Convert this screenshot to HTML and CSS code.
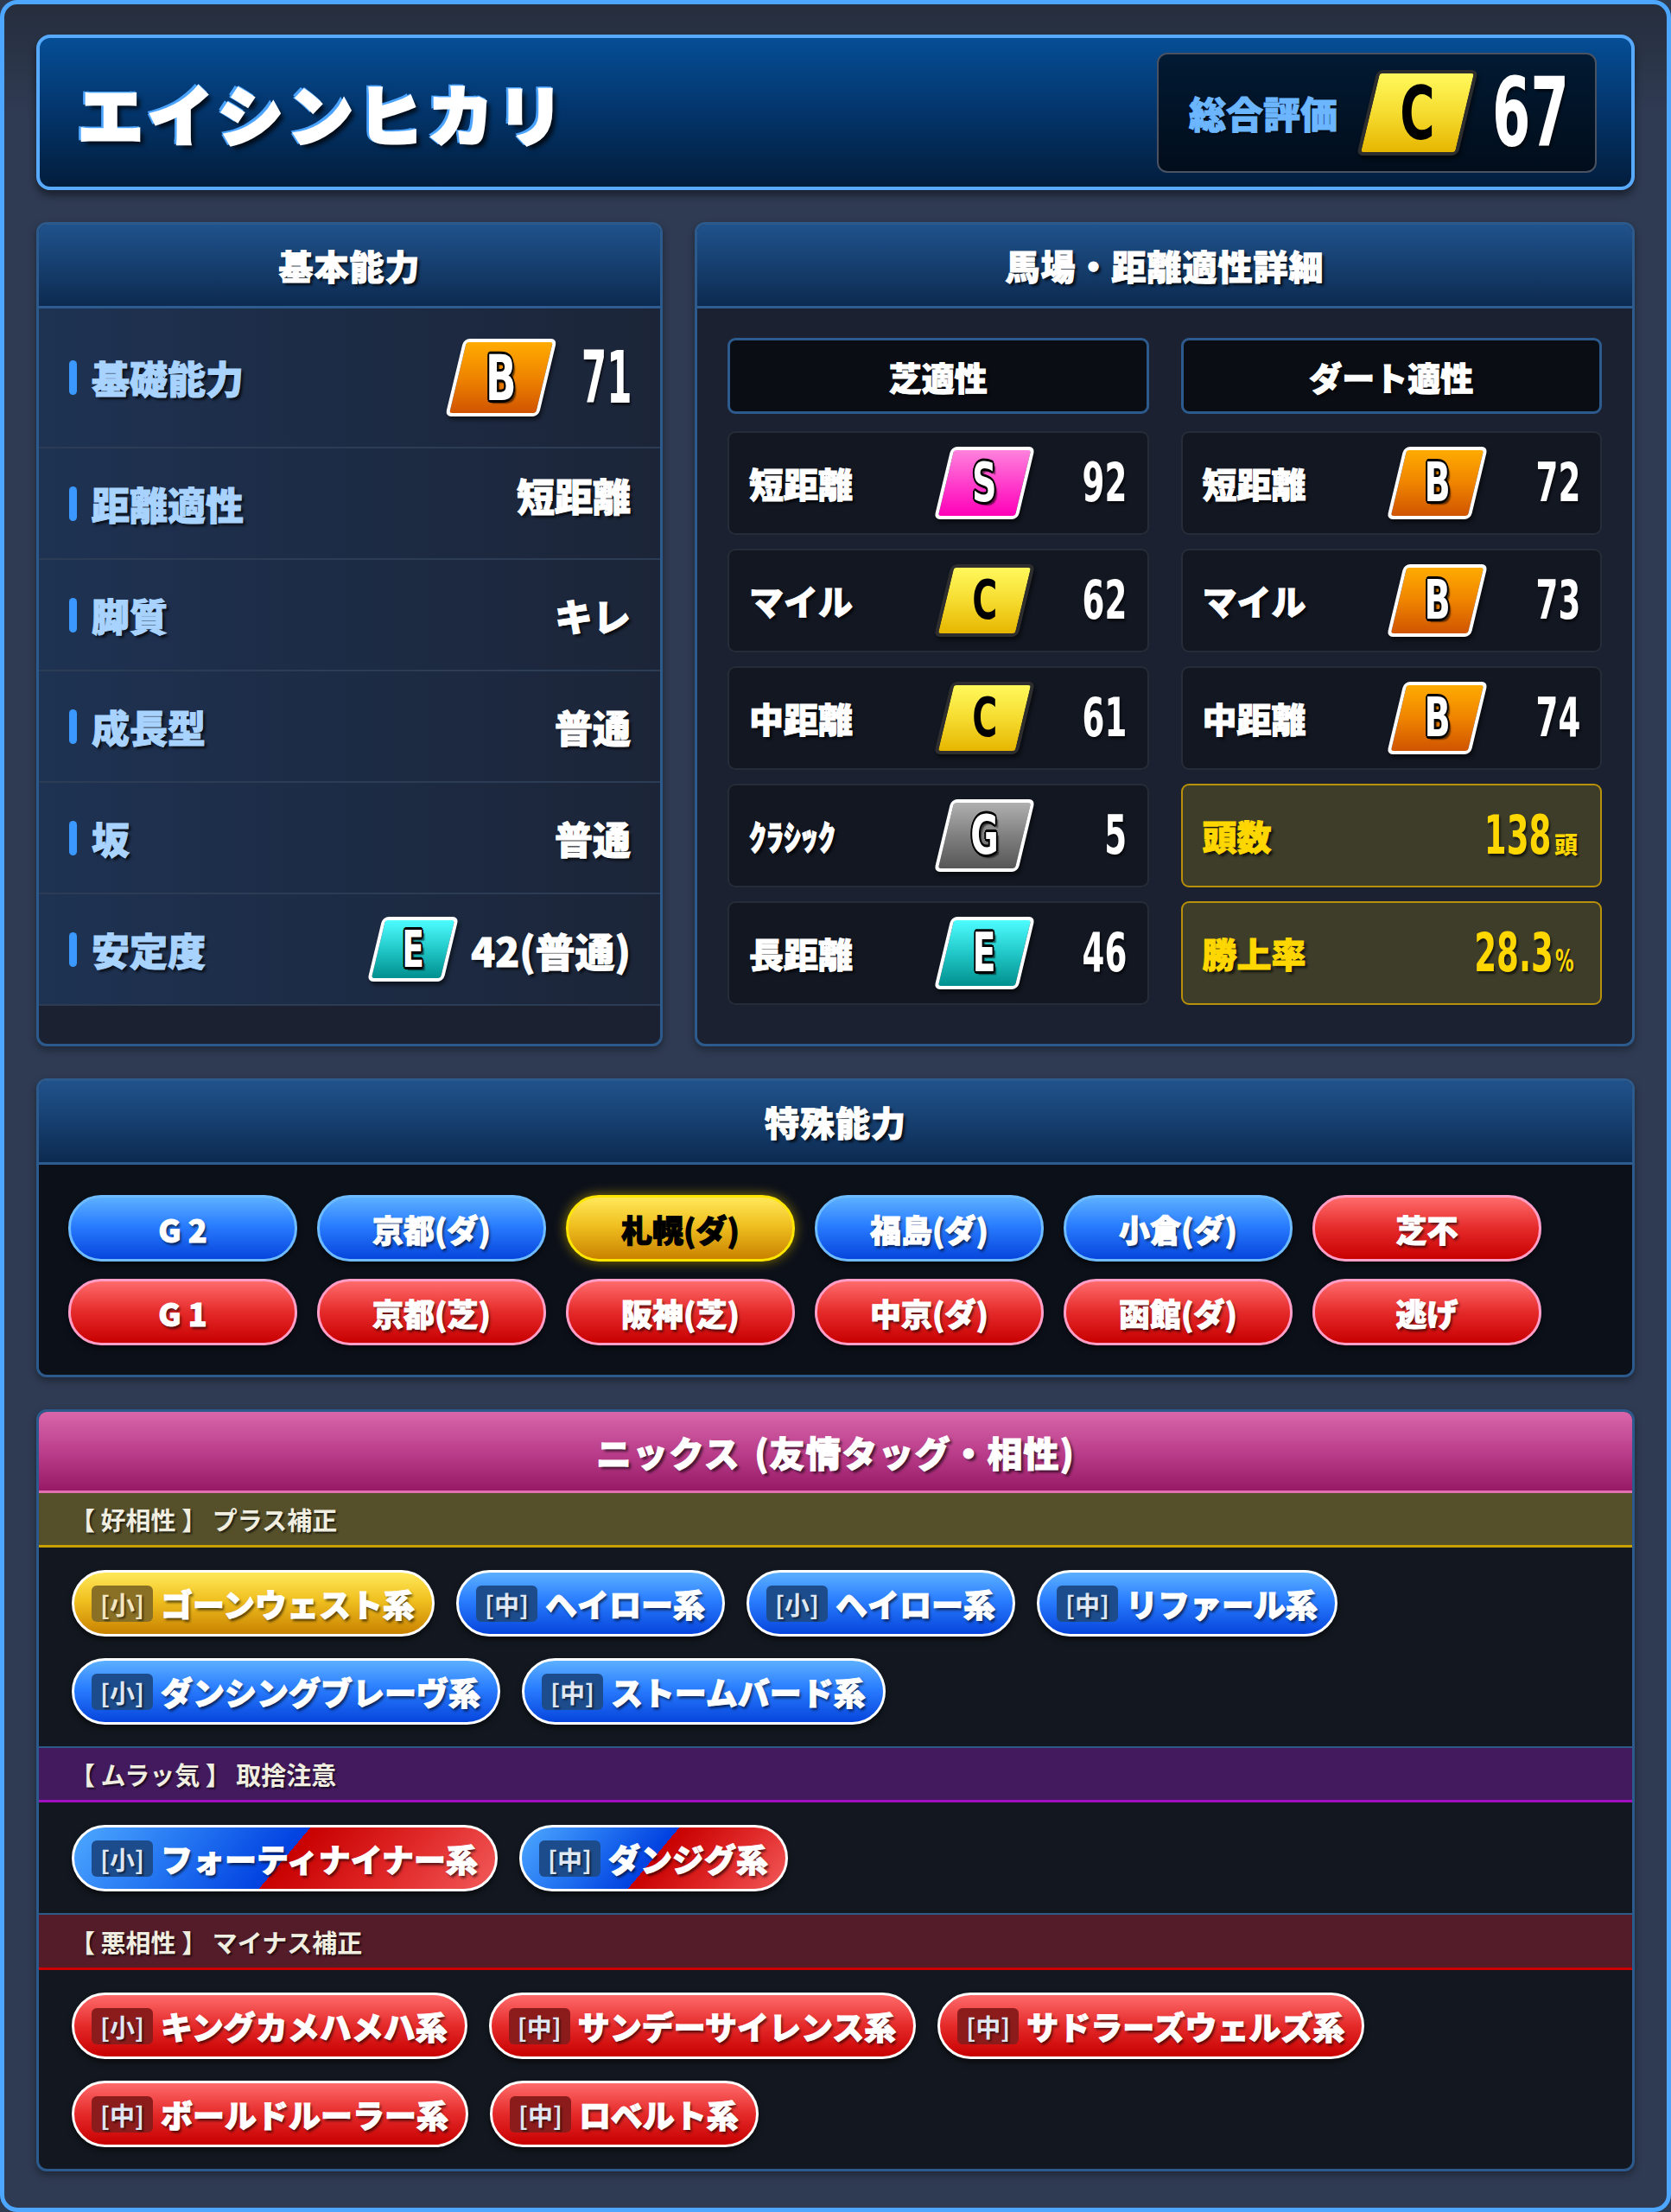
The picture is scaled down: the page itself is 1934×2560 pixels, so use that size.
FILE: index.html
```html
<!DOCTYPE html>
<html lang="ja">
<head>
<meta charset="utf-8">
<title>エイシンヒカリ</title>
<link rel="stylesheet" href="styles.css">
</head>
<body>
<div class="frame">
  <header class="hero">
    <h1 class="name">エイシンヒカリ</h1>
    <div class="score">
      <span class="score-label">総合評価</span>
      <span class="badge badge-xl g-c"><span class="bl">C</span></span>
      <span class="numfit num-xl">67</span>
    </div>
  </header>

  <div class="top-grid">
    <section class="panel">
      <div class="panel-head">基本能力</div>
      <div class="basic-list">
        <div class="brow brow-first">
          <span class="blabel">基礎能力</span>
          <span class="bval"><span class="badge badge-lg g-b"><span class="bl">B</span></span><span class="numfit num-lg">71</span></span>
        </div>
        <div class="brow"><span class="blabel">距離適性</span><span class="bval bval-up">短距離</span></div>
        <div class="brow"><span class="blabel">脚質</span><span class="bval">キレ</span></div>
        <div class="brow"><span class="blabel">成長型</span><span class="bval">普通</span></div>
        <div class="brow"><span class="blabel">坂</span><span class="bval">普通</span></div>
        <div class="brow"><span class="blabel">安定度</span><span class="bval"><span class="badge badge-md g-e"><span class="bl">E</span></span><span class="bval-text">42(普通)</span></span></div>
      </div>
    </section>

    <section class="panel">
      <div class="panel-head">馬場・距離適性詳細</div>
      <div class="apt-grid">
        <div class="apt-sub">芝適性</div>
        <div class="apt-sub">ダート適性</div>

        <div class="cell"><span class="cl">短距離</span><span class="badge badge-sm g-s"><span class="bl">S</span></span><span class="num">92</span></div>
        <div class="cell"><span class="cl">短距離</span><span class="badge badge-sm g-b"><span class="bl">B</span></span><span class="num">72</span></div>

        <div class="cell"><span class="cl">マイル</span><span class="badge badge-sm g-c"><span class="bl">C</span></span><span class="num">62</span></div>
        <div class="cell"><span class="cl">マイル</span><span class="badge badge-sm g-b"><span class="bl">B</span></span><span class="num">73</span></div>

        <div class="cell"><span class="cl">中距離</span><span class="badge badge-sm g-c"><span class="bl">C</span></span><span class="num">61</span></div>
        <div class="cell"><span class="cl">中距離</span><span class="badge badge-sm g-b"><span class="bl">B</span></span><span class="num">74</span></div>

        <div class="cell"><span class="cl">ｸﾗｼｯｸ</span><span class="badge badge-sm g-g"><span class="bl">G</span></span><span class="num">5</span></div>
        <div class="cell stat"><span class="cl">頭数</span><span class="sv"><span class="num">138</span><span class="unit">頭</span></span></div>

        <div class="cell"><span class="cl">長距離</span><span class="badge badge-sm g-e"><span class="bl">E</span></span><span class="num">46</span></div>
        <div class="cell stat"><span class="cl">勝上率</span><span class="sv"><span class="num">28.3</span><span class="unit unit-pct">%</span></span></div>
      </div>
    </section>
  </div>

  <section class="panel special">
    <div class="panel-head">特殊能力</div>
    <div class="pills">
      <span class="pill blue">G 2</span>
      <span class="pill blue">京都(ダ)</span>
      <span class="pill yellow">札幌(ダ)</span>
      <span class="pill blue">福島(ダ)</span>
      <span class="pill blue">小倉(ダ)</span>
      <span class="pill red">芝不</span>
      <span class="pill red">G 1</span>
      <span class="pill red">京都(芝)</span>
      <span class="pill red">阪神(芝)</span>
      <span class="pill red">中京(ダ)</span>
      <span class="pill red">函館(ダ)</span>
      <span class="pill red">逃げ</span>
    </div>
  </section>

  <section class="panel nicks">
    <div class="nicks-head">ニックス&nbsp;(友情タッグ・相性)</div>
    <div class="band band-good">【 好相性 】 プラス補正</div>
    <div class="tags">
      <span class="tag yellow"><span class="sz">[小]</span>ゴーンウェスト系</span>
      <span class="tag blue"><span class="sz">[中]</span>ヘイロー系</span>
      <span class="tag blue"><span class="sz">[小]</span>ヘイロー系</span>
      <span class="tag blue"><span class="sz">[中]</span>リファール系</span>
      <span class="tag blue"><span class="sz">[小]</span>ダンシングブレーヴ系</span>
      <span class="tag blue"><span class="sz">[中]</span>ストームバード系</span>
    </div>
    <div class="band band-mix">【 ムラッ気 】 取捨注意</div>
    <div class="tags">
      <span class="tag split"><span class="sz">[小]</span>フォーティナイナー系</span>
      <span class="tag split"><span class="sz">[中]</span>ダンジグ系</span>
    </div>
    <div class="band band-bad">【 悪相性 】 マイナス補正</div>
    <div class="tags">
      <span class="tag red"><span class="sz">[小]</span>キングカメハメハ系</span>
      <span class="tag red"><span class="sz">[中]</span>サンデーサイレンス系</span>
      <span class="tag red"><span class="sz">[中]</span>サドラーズウェルズ系</span>
      <span class="tag red"><span class="sz">[中]</span>ボールドルーラー系</span>
      <span class="tag red"><span class="sz">[中]</span>ロベルト系</span>
    </div>
  </section>
</div>
</body>
</html>
```

FILE: styles.css
```css
* { box-sizing: border-box; }
html, body { margin: 0; padding: 0; }
body {
  background: #2d3a50;
  font-family: "Noto Sans CJK JP", "Noto Sans", sans-serif;
}

.frame {
  width: 1934px;
  height: 2560px;
  border: 5px solid #4da6ff;
  border-radius: 20px;
  background: linear-gradient(180deg, #262e3d 0%, #2f3b53 5%, #2f3b53 100%);
  padding: 35px 37px 0;
  display: flex;
  flex-direction: column;
  gap: 37px;
}

/* ---------- hero ---------- */
.hero {
  flex: none;
  height: 180px;
  border: 4px solid #58aaff;
  border-radius: 16px;
  background: linear-gradient(180deg, #054e96 0%, #03376f 45%, #021d3c 100%);
  display: flex;
  align-items: center;
  justify-content: space-between;
  padding: 0 40px 0 44px;
  box-shadow: 0 6px 10px rgba(0, 0, 0, .45);
}
.name {
  margin: 0;
  font-size: 76px;
  font-weight: 900;
  letter-spacing: 5px;
  line-height: 1;
  color: #fff;
  -webkit-text-stroke: 3px #fff;
  text-shadow: -4px -3px 0 #4aa3ff, -4px 0 0 #4aa3ff, 0 -3px 0 #4aa3ff, 5px 5px 5px rgba(0, 0, 0, .75);
}
.score {
  width: 509px;
  height: 139px;
  border: 2px solid #4a5261;
  border-radius: 12px;
  background: linear-gradient(180deg, #021a33, #010d1b);
  display: flex;
  align-items: center;
  padding-left: 35px;
}
.score-label {
  font-size: 43px;
  font-weight: 900;
  color: #6cb6ff;
  line-height: 1;
  -webkit-text-stroke: 1px #6cb6ff;
  text-shadow: 2px 2px 2px rgba(0, 0, 0, .6);
}

/* ---------- grade badges ---------- */
.badge {
  flex: none;
  display: inline-flex;
  align-items: center;
  justify-content: center;
  transform: skewX(-13.5deg);
  border-radius: 7px;
  border: 4px solid #fff;
  box-shadow: 3px 4px 4px rgba(0, 0, 0, .5);
}
.bl {
  display: inline-block;
  transform: skewX(13.5deg) scaleX(.64);
  font-family: "DejaVu Sans", sans-serif;
  font-weight: bold;
  line-height: 1;
  color: #fff;
  text-shadow: -3px 0 #000, 3px 0 #000, 0 -3px #000, 0 3px #000,
    -2px -2px #000, 2px -2px #000, -2px 2px #000, 2px 2px #000, 5px 4px 2px rgba(0, 0, 0, .6);
}
.badge-xl { width: 117px; height: 99px; margin: 0 28px 0 34px; }
.badge-xl .bl { font-size: 86px; }
.badge-lg { width: 108px; height: 90px; }
.badge-lg .bl { font-size: 73px; }
.badge-md { width: 88px; height: 75px; }
.badge-md .bl { font-size: 59px; }
.badge-sm { width: 97px; height: 84px; }
.badge-sm .bl { font-size: 62px; }

.g-c { background: linear-gradient(180deg, #fff95c 0%, #f6dc30 50%, #e6b600 100%); border-color: #2e2e2e; }
.g-c .bl { color: #000; text-shadow: none; }
.g-b { background: linear-gradient(180deg, #ffab00 0%, #ef8400 50%, #d05400 100%); }
.g-e { background: linear-gradient(180deg, #4dfcff 0%, #22c8c8 50%, #00908f 100%); }
.g-s { background: linear-gradient(180deg, #ff82dc 0%, #ff3fcc 50%, #ff00b8 100%); }
.g-g { background: linear-gradient(180deg, #b0b0b0 0%, #808080 50%, #565656 100%); }

/* ---------- numbers ---------- */
.numfit {
  flex: none;
  display: inline-block;
  font-family: "DejaVu Sans", sans-serif;
  font-weight: bold;
  color: #fff;
  line-height: 1;
  white-space: nowrap;
  transform-origin: left center;
  text-shadow: 3px 3px 3px rgba(0, 0, 0, .6);
}
.num-xl { font-size: 110px; width: 89px; transform: scaleX(.58); }
.num-lg { font-size: 84px; width: 57px; transform: scaleX(.5); margin-left: 39px; }

.num {
  display: inline-block;
  justify-self: end;
  font-family: "DejaVu Sans", sans-serif;
  font-weight: bold;
  font-size: 62px;
  line-height: 1;
  color: #fff;
  white-space: nowrap;
  transform: scaleX(.6);
  transform-origin: right center;
  text-shadow: 3px 3px 3px rgba(0, 0, 0, .6);
}

/* ---------- panels ---------- */
.top-grid {
  flex: none;
  display: grid;
  grid-template-columns: 725px 1fr;
  gap: 37px;
}
.panel {
  border: 3px solid #2d5a8c;
  border-radius: 12px;
  overflow: hidden;
  background: #1b2130;
  display: flex;
  flex-direction: column;
  box-shadow: 0 4px 8px rgba(0, 0, 0, .35);
}
.panel-head {
  flex: none;
  height: 97px;
  border-bottom: 3px solid #2e5c90;
  background: linear-gradient(180deg, #20528c 0%, #163f6f 50%, #0c2a50 100%);
  display: flex;
  align-items: center;
  justify-content: center;
  color: #fff;
  font-size: 40px;
  font-weight: 900;
  letter-spacing: 1px;
  -webkit-text-stroke: 1px #fff;
  text-shadow: 3px 3px 3px rgba(0, 0, 0, .75);
}

/* basic list */
.basic-list { display: flex; flex-direction: column; }
.brow {
  height: 129px;
  display: flex;
  align-items: center;
  justify-content: space-between;
  padding: 0 34px 0 35px;
  border-bottom: 2px solid #2b3c54;
  background: linear-gradient(90deg, #1e3252 0%, #1c2a42 60%, #1c2538 100%);
}
.brow-first { height: 162px; }
.blabel {
  display: flex;
  align-items: center;
  gap: 17px;
  font-size: 44px;
  font-weight: 900;
  color: #a9d3ff;
  line-height: 1;
  -webkit-text-stroke: 1px #a9d3ff;
  text-shadow: 3px 3px 3px rgba(0, 0, 0, .7);
}
.blabel::before {
  content: "";
  width: 9px;
  height: 40px;
  border-radius: 5px;
  background: #3b98ff;
}
.bval {
  display: flex;
  align-items: center;
  font-size: 44px;
  font-weight: 900;
  color: #fff;
  line-height: 1;
  -webkit-text-stroke: 1px #fff;
  text-shadow: 3px 3px 3px rgba(0, 0, 0, .7);
}
.bval .badge, .bval .numfit { -webkit-text-stroke: 0; }
.bval-up { margin-bottom: 20px; }
.bval-text { font-size: 46px; margin-left: 23px; }

/* aptitude grid */
.apt-grid {
  flex: 1;
  display: grid;
  grid-template-columns: 1fr 1fr;
  grid-template-rows: auto repeat(5, 120px);
  column-gap: 37px;
  row-gap: 16px;
  padding: 34px 35px 45px;
}
.apt-sub {
  height: 88px;
  margin-bottom: 4px;
  background: #0a0d13;
  border: 3px solid #2d5a8c;
  border-radius: 9px;
  display: flex;
  align-items: center;
  justify-content: center;
  color: #fff;
  font-size: 38px;
  font-weight: 900;
  -webkit-text-stroke: 1px #fff;
  text-shadow: 3px 3px 3px rgba(0, 0, 0, .7);
}
.cell {
  display: grid;
  grid-template-columns: 1fr 108px 106px;
  align-items: center;
  padding: 0 23px;
  background: #121722;
  border: 2px solid #262c38;
  border-radius: 9px;
}
.cl {
  font-size: 40px;
  font-weight: 900;
  color: #fff;
  line-height: 1;
  white-space: nowrap;
  -webkit-text-stroke: 1px currentColor;
  text-shadow: 3px 3px 3px rgba(0, 0, 0, .7);
}
.stat {
  display: flex;
  justify-content: space-between;
  background: #3d3d2a;
  border-color: #b8900a;
  padding-right: 26px;
}
.stat .cl { color: #ffd700; }
.sv { display: flex; align-items: baseline; }
.stat .num { color: #ffd700; }
.unit {
  font-size: 27px;
  font-weight: 900;
  color: #ffd700;
  margin-left: 4px;
  text-shadow: 2px 2px 2px rgba(0, 0, 0, .6);
}
.unit-pct {
  font-family: "DejaVu Sans", sans-serif;
  font-weight: bold;
  font-size: 36px;
  display: inline-block;
  transform: scaleX(.6);
  transform-origin: left center;
  margin-left: 2px;
  margin-right: -10px;
}

/* ---------- pills / tags ---------- */
.special { flex: none; }
.pills {
  display: flex;
  flex-wrap: wrap;
  gap: 20px 23px;
  padding: 35px 34px 34px;
  background: #0c1019;
}
.pill {
  width: 265px;
  height: 77px;
  border-radius: 38px;
  border: 3px solid;
  display: flex;
  align-items: center;
  justify-content: center;
  font-size: 36px;
  font-weight: 900;
  color: #fff;
  -webkit-text-stroke: 1px currentColor;
  text-shadow: 2px 3px 3px rgba(0, 0, 0, .6);
  box-shadow: 0 4px 6px rgba(0, 0, 0, .55);
}
.blue { background: linear-gradient(180deg, #5cb0ff 0%, #2a7dff 45%, #0645dc 100%); border-color: #6ebcff; }
.red { background: linear-gradient(180deg, #ff6b6b 0%, #e52a2a 50%, #c80000 100%); border-color: #ff9fc8; }
.yellow {
  background: linear-gradient(180deg, #ffe85a 0%, #f0c020 45%, #c98200 100%);
  border-color: #ffe600;
  color: #000;
  text-shadow: none;
  box-shadow: 0 0 14px rgba(255, 215, 0, .55), 0 4px 6px rgba(0, 0, 0, .4);
}
.split {
  background: linear-gradient(130deg, #4ea8ff 0%, #2070f0 28%, #0040e0 50%, #c80000 50%, #e02828 75%, #f25a5a 100%);
  border-color: #c800c8;
}

.nicks { flex: none; background: #131820; }
.nicks-head {
  height: 94px;
  border-bottom: 3px solid #e070b0;
  background: linear-gradient(180deg, #d966aa 0%, #bb3f8c 50%, #981a66 100%);
  display: flex;
  align-items: center;
  justify-content: center;
  color: #fff;
  font-size: 41px;
  font-weight: 900;
  letter-spacing: 1px;
  word-spacing: 6px;
  -webkit-text-stroke: 1px #fff;
  text-shadow: 3px 3px 3px rgba(0, 0, 0, .6);
}
.band {
  height: 63px;
  display: flex;
  align-items: center;
  padding-left: 36px;
  font-size: 29px;
  font-weight: 700;
  color: #f0eee0;
  text-shadow: 2px 2px 2px rgba(0, 0, 0, .6);
}
.band-good { background: #55502a; border-bottom: 3px solid #c8a000; }
.band-mix { height: 65px; background: #431a5e; border-top: 2px solid #2e5a88; border-bottom: 3px solid #a010c0; }
.band-bad { height: 66px; background: #541c28; border-top: 2px solid #2e5a88; border-bottom: 3px solid #cc0000; }

.tags {
  display: flex;
  flex-wrap: wrap;
  gap: 25px 25px;
  padding: 26px 38px 25px;
}
.tag {
  height: 77px;
  border-radius: 39px;
  border: 3px solid;
  padding: 0 20px;
  display: inline-flex;
  align-items: center;
  gap: 9px;
  font-size: 37px;
  font-weight: 900;
  color: #fff;
  white-space: nowrap;
  -webkit-text-stroke: 1px currentColor;
  text-shadow: 2px 3px 3px rgba(0, 0, 0, .6);
  box-shadow: 0 4px 6px rgba(0, 0, 0, .55);
}
.sz {
  height: 42px;
  padding: 0 10px;
  border-radius: 6px;
  display: inline-flex;
  align-items: center;
  font-size: 29px;
  font-weight: 700;
  color: #dfe7f2;
  background: #1d4c8c;
  -webkit-text-stroke: 0;
  text-shadow: 2px 2px 2px rgba(0, 0, 0, .5);
}
.red .sz { background: #8c1c1c; }
.yellow .sz { background: #8a7024; color: #f3e6c0; }
.split .sz { background: #1d4c8c; }
```
